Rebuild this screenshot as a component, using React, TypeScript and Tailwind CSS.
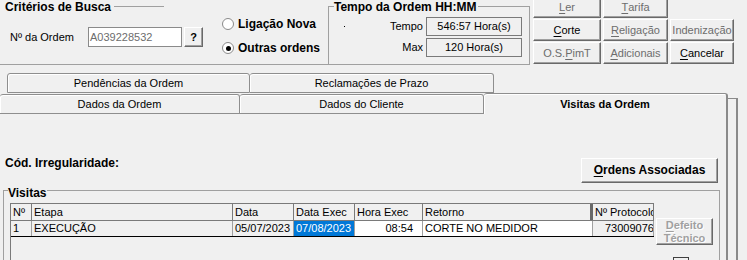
import React from "react";

const FONT = "font-['Liberation_Sans','Arial',sans-serif]";
const raised =
  "bg-[#f0f0f0] border border-t-white border-l-white border-r-[#696969] border-b-[#696969] shadow-[inset_-1px_-1px_0_#a0a0a0]";

const Btn = ({ children, off }: { children: React.ReactNode; off?: boolean }) => (
  <div className={`flex items-center justify-center ${raised} ${off ? "text-[#6d6d6d]" : "text-black"}`}>
    {children}
  </div>
);

const U = ({ children }: { children: React.ReactNode }) => <span className="underline underline-offset-[2px]">{children}</span>;

const Radio = ({ label, checked }: { label: string; checked?: boolean }) => (
  <div className="flex items-center h-[14px]">
    <div className="w-[12px] h-[12px] rounded-full border border-[#8a8a8a] bg-white flex items-center justify-center">
      {checked && <div className="w-[5px] h-[5px] rounded-full bg-black" />}
    </div>
    <span className="ml-[4px] font-bold text-[12px]">{label}</span>
  </div>
);

const Tab = ({ w, first, selected, children }: { w: string; first?: boolean; selected?: boolean; children: React.ReactNode }) => (
  <div
    className={`${w} flex items-center justify-center bg-[#f0f0f0] border-t border-[#8e8e8e] rounded-t-[3px] shadow-[inset_1px_1px_0_#ffffff] ${
      first ? "border-l" : ""
    } ${selected ? "h-[21px] font-bold border-r-2 border-r-[#8a8a8a]" : "h-[20px] border-r border-b"}`}
  >
    {children}
  </div>
);

const cols = [
  { w: "w-[21px]", h: "Nº", v: "1", bg: "bg-[#f0f0f0]" },
  { w: "w-[201px]", h: "Etapa", v: "EXECUÇÃO", bg: "bg-[#f0f0f0]" },
  { w: "w-[61px]", h: "Data", v: "05/07/2023", bg: "bg-[#f0f0f0]" },
  { w: "w-[61px]", h: "Data Exec", v: "07/08/2023", bg: "bg-[#0078d7] text-white" },
  { w: "w-[68px]", h: "Hora Exec", v: "08:54", bg: "bg-white justify-end pr-[9px]" },
  { w: "w-[170px]", h: "Retorno", v: "CORTE NO MEDIDOR", bg: "bg-white" },
  { w: "w-[61px]", h: "Nº Protocolo", v: "73009076", bg: "bg-[#f0f0f0] pl-[12px]" },
];

export default function App() {
  return (
    <div className={`w-[747px] h-[260px] overflow-hidden bg-[#f0f0f0] text-black text-[11px] leading-[13px] ${FONT}`}>
      {/* top area */}
      <div className="flex h-[65px]">
        {/* Critérios de Busca */}
        <div className="w-[328px] h-[65px] border-b border-[#a0a0a0]">
          <div className="flex h-[14px] pt-[1px]">
            <span className="ml-[5px] font-bold text-[12px]">Critérios de Busca</span>
            <span className="ml-[3px] mt-[5px] w-[50px] h-0 border-t border-[#a0a0a0]" />
          </div>
          <div className="flex items-start">
            <div className="flex items-center mt-[13px]">
              <span className="ml-[10px] w-[78px]">Nº da Ordem</span>
              <div className="w-[94px] h-[20px] bg-white border border-[#8a8a8a] flex items-center pl-[1px] text-[#6d6d6d]">
                A039228532
              </div>
              <div className={`ml-[2px] w-[19px] h-[20px] flex items-center justify-center font-bold ${raised}`}>?</div>
            </div>
            <div className="ml-[19px] mt-[3px] flex flex-col gap-[10px]">
              <Radio label="Ligação Nova" />
              <Radio label="Outras ordens" checked />
            </div>
          </div>
        </div>

        {/* Tempo da Ordem */}
        <div className="w-[202px] h-[65px] flex flex-col">
          <div className="flex items-start h-[14px]">
            <div className="w-[6px] h-[8px] mt-[6px] border-t border-l border-[#a0a0a0]" />
            <span className="pt-[1px] font-bold text-[12px]">Tempo da Ordem HH:MM</span>
            <div className="flex-1 h-[8px] mt-[6px] ml-[2px] border-t border-r border-[#a0a0a0]" />
          </div>
          <div className="flex-1 border-l border-r border-b border-[#a0a0a0]">
            <div className="flex items-center mt-[3px]">
              <div className="w-[97px] flex items-center">
                <span className="ml-[15px] w-[1px] h-[1px] bg-black" />
                <span className="ml-auto pr-[3px]">Tempo</span>
              </div>
              <div className="w-[96px] h-[19px] border border-[#7a7a7a] flex items-center justify-center">546:57 Hora(s)</div>
            </div>
            <div className="flex items-center mt-[2px]">
              <span className="w-[97px] text-right pr-[3px]">Max</span>
              <div className="w-[96px] h-[19px] border border-[#7a7a7a] flex items-center justify-center">120 Hora(s)</div>
            </div>
          </div>
        </div>

        {/* action buttons */}
        <div className="ml-[3px] -mt-[4px] grid grid-cols-[68px_65px_64px] grid-rows-[22px_22px_22px] gap-x-[2px] gap-y-[1px]">
          <Btn off><U>L</U>er</Btn>
          <Btn off><U>T</U>arifa</Btn>
          <div />
          <Btn><U>C</U>orte</Btn>
          <Btn off><U>R</U>eligação</Btn>
          <Btn off>Indenização</Btn>
          <Btn off>O.S. <U>P</U>imT</Btn>
          <Btn off><U>A</U>dicionais</Btn>
          <Btn><U>C</U>ancelar</Btn>
        </div>
      </div>

      {/* tabs */}
      <div className="flex">
        <div className="w-[728px]">
          <div className="flex pl-[7px] pt-[8px]">
            <Tab w="w-[243px]" first>Pendências da Ordem</Tab>
            <Tab w="w-[244px]">Reclamações de Prazo</Tab>
          </div>
          <div className="flex items-end h-[21px]">
            <Tab w="w-[240px]">Dados da Ordem</Tab>
            <Tab w="w-[244px]">Dados do Cliente</Tab>
            <Tab w="w-[244px]" selected>Visitas da Ordem</Tab>
          </div>

          {/* panel */}
          <div className="h-[147px] border-r-2 border-[#8a8a8a] pt-[43px]">
            <div className="flex items-start h-[26px]">
              <span className="ml-[5px] font-bold text-[12px]">Cód. Irregularidade:</span>
              <div className={`ml-auto mr-[8px] mt-[1px] w-[137px] h-[25px] flex items-center justify-center font-bold text-[12px] ${raised}`}>
                <span><U>O</U>rdens Associadas</span>
              </div>
            </div>

            <div className="mt-[7px] ml-[3px] w-[717px] h-[100px] border-t border-l border-r border-[#a0a0a0] flex flex-col items-start">
              <span className="ml-[4px] -mt-[4px] bg-[#f0f0f0] pr-[1px] font-bold text-[12px]">Visitas</span>
              <div className="flex ml-[6px] mt-[3px]">
                <div className="w-[644px] h-[80px] border-l border-[#7a7a7a] flex flex-col">
                  <div className="flex h-[18px] border-t border-b border-[#7a7a7a]">
                    {cols.map((c, i) => (
                      <div
                        key={c.h}
                        className={`${c.w} flex-none flex items-center pl-[2px] overflow-hidden whitespace-nowrap border-[#7a7a7a] ${
                          i === 5 ? "border-r-[3px] border-r-[#696969]" : "border-r"
                        }`}
                      >
                        {c.h}
                      </div>
                    ))}
                  </div>
                  <div className="flex h-[16px] border-b border-black">
                    {cols.map((c) => (
                      <div
                        key={c.h}
                        className={`${c.w} flex-none flex items-center pl-[2px] overflow-hidden whitespace-nowrap border-r border-[#a0a0a0] ${c.bg}`}
                      >
                        {c.v}
                      </div>
                    ))}
                  </div>
                </div>
                <div className="ml-[2px] flex flex-col">
                  <div
                    className={`mt-[15px] w-[57px] h-[27px] flex flex-col items-center justify-center font-bold text-[#a0a0a0] [text-shadow:1px_1px_0_#ffffff] ${raised}`}
                  >
                    <span><U>D</U>efeito</span>
                    <span>Técnico</span>
                  </div>
                  <div className="ml-[17px] mt-[12px] w-[16px] h-[16px] border border-[#404040] flex items-center justify-center font-bold">
                    1
                  </div>
                </div>
              </div>
            </div>
          </div>
        </div>
        <div className="w-[10px] h-[200px] mt-[33px] border-t border-r-2 border-[#8a8a8a]" />
      </div>
    </div>
  );
}
